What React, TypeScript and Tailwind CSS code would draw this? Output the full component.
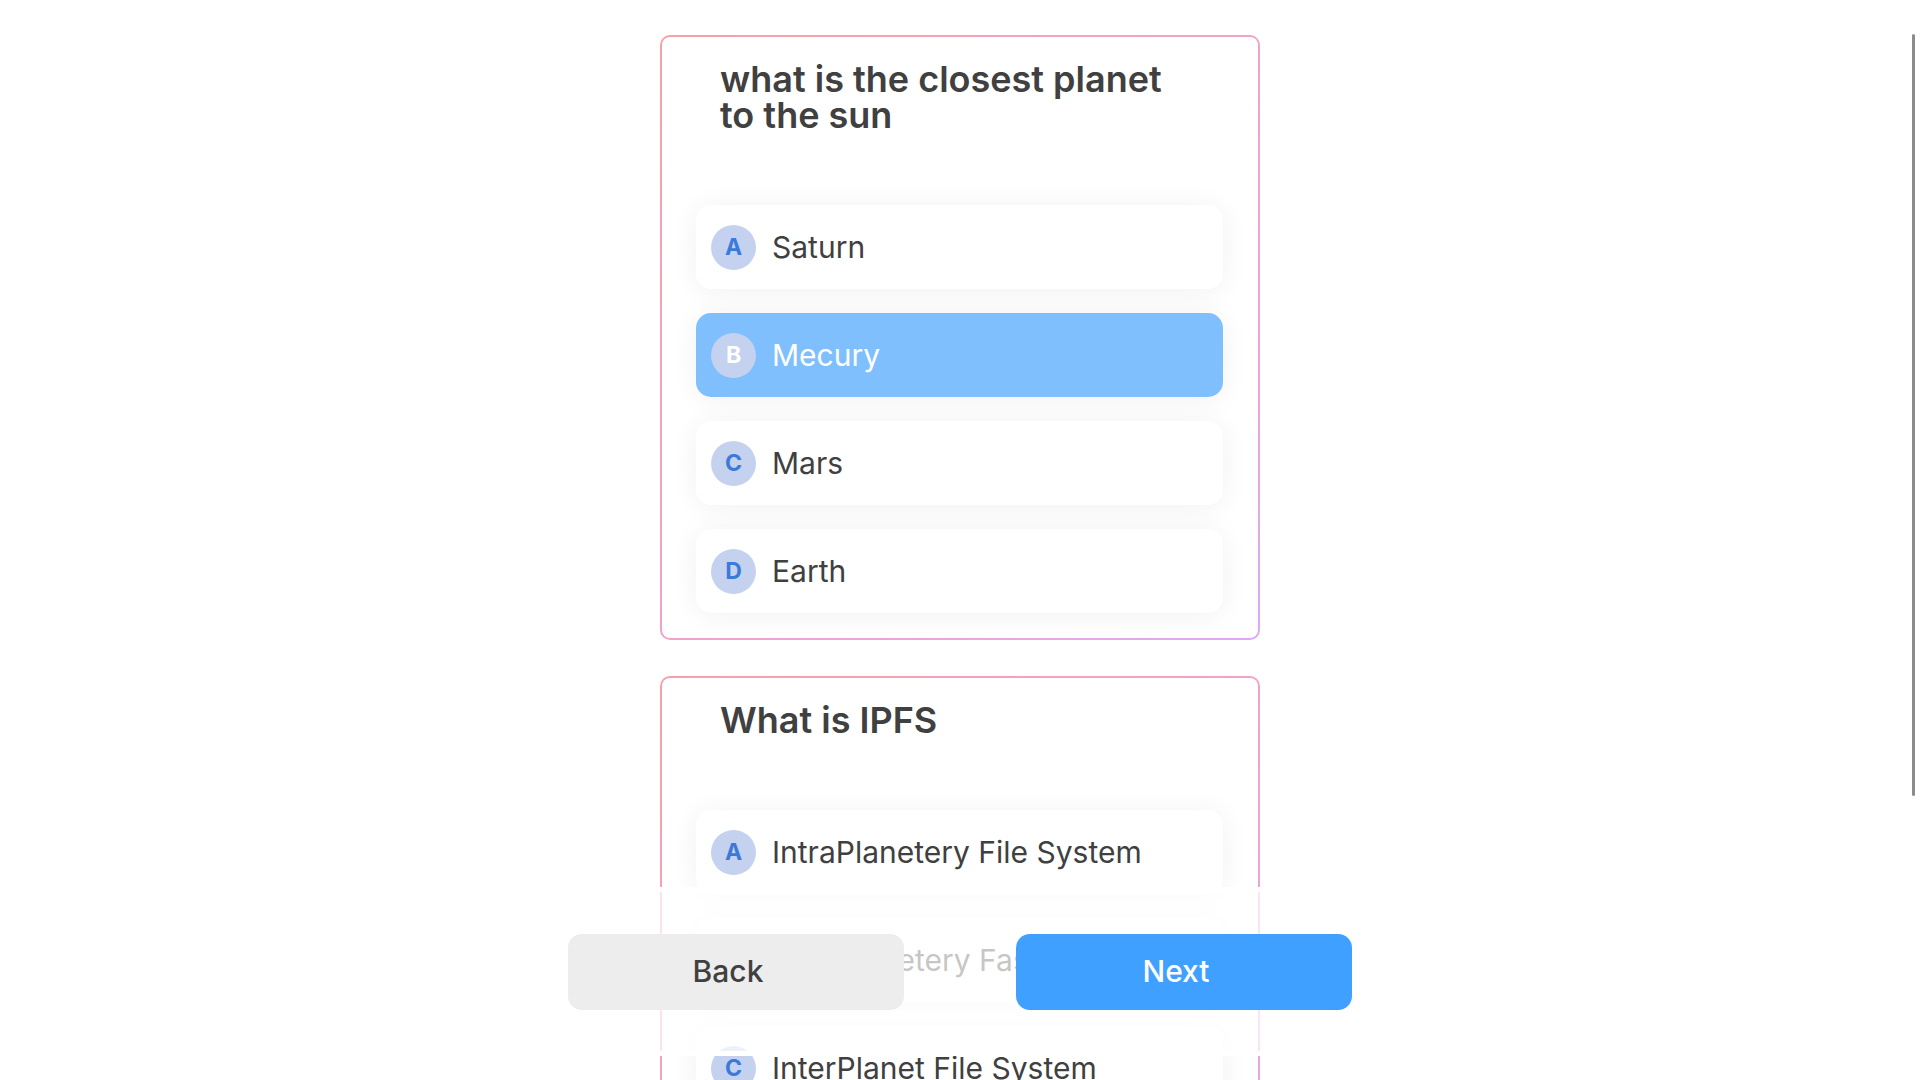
import React from "react";

type Question = {
  title: string;
  options: string[];
  selected?: number;
};

const questions: Question[] = [
  {
    title: "what is the closest planet to the sun",
    options: ["Saturn", "Mecury", "Mars", "Earth"],
    selected: 1,
  },
  {
    title: "What is IPFS",
    options: [
      "IntraPlanetery File System",
      "InterPlanetery Fast System",
      "InterPlanet File System",
      "InterPlanetary File System",
    ],
  },
];

const letters = ["A", "B", "C", "D"];

const QuestionCard = ({ question }: { question: Question }) => {
  return (
    <div className="w-[600px] shrink-0 rounded-[10px] bg-linear-to-br from-[#fa9fa8] via-[#f1a3c8] to-[#dfa8f3] p-[2px]">
      <div className="rounded-[8px] bg-white pt-[24px] pb-[25px]">
        <h2 className="ml-[58px] w-[478px] text-[36px] leading-[36px] font-semibold text-[#404040]">
          {question.title}
        </h2>
        <div className="mt-[72px] ml-[34px] flex w-[527px] flex-col gap-[24px]">
          {question.options.map((option, idx) => {
            const active = question.selected === idx;
            return (
              <div
                key={idx}
                className={`flex h-[84px] items-center gap-[16px] rounded-[15px] pl-[15px] shadow-[0_2px_28px_rgba(0,0,0,0.06)] ${
                  active ? "bg-[#80bffd]" : "bg-white"
                }`}
              >
                <div
                  className={`flex h-[45px] w-[45px] items-center justify-center rounded-full bg-[#c4d1ef] text-[23px] font-bold ${
                    active ? "text-white" : "text-[#3b7ad9]"
                  }`}
                >
                  {letters[idx]}
                </div>
                <span
                  className={`text-[30px] ${
                    active ? "text-white" : "text-[#404040]"
                  }`}
                >
                  {option}
                </span>
              </div>
            );
          })}
        </div>
      </div>
    </div>
  );
};

export default function App() {
  return (
    <div className="relative h-screen overflow-hidden bg-white font-['Inter',sans-serif]">
      <div className="flex flex-col items-center gap-[36px] pt-[35px]">
        {questions.map((q, i) => (
          <QuestionCard key={i} question={q} />
        ))}
      </div>

      {/* bottom nav */}
      <div className="absolute right-0 bottom-[24px] left-0 flex h-[169px] items-center justify-center gap-[112px] border-y-[5px] border-white bg-white/70">
        <button className="h-[76px] w-[336px] rounded-[14px] bg-[#ededed] pr-[16px] text-[30px] font-medium text-[#404040]">
          Back
        </button>
        <button className="h-[76px] w-[336px] rounded-[14px] bg-[#40a0ff] pr-[16px] text-[30px] font-medium text-white">
          Next
        </button>
      </div>

      {/* overlay scrollbar thumb */}
      <div className="absolute top-[34px] right-[5px] h-[762px] w-[3px] rounded-full bg-[#8c8c8c]" />
    </div>
  );
}
